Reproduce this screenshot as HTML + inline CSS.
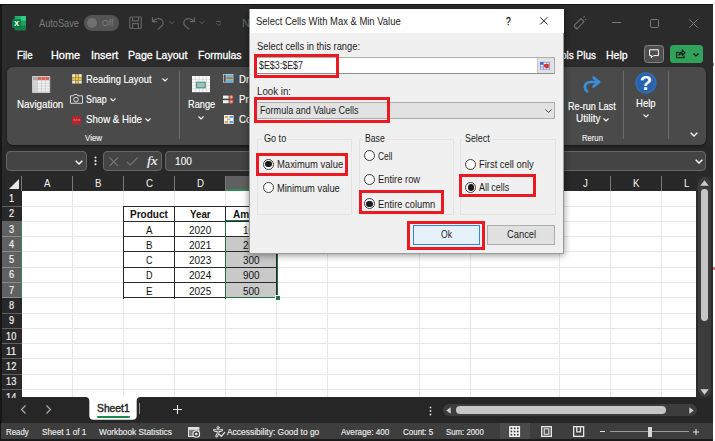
<!DOCTYPE html>
<html>
<head>
<meta charset="utf-8">
<title>Select Cells With Max &amp; Min Value</title>
<style>
html,body{margin:0;padding:0;}
body{width:715px;height:441px;overflow:hidden;background:#fff;font-family:"Liberation Sans",sans-serif;position:relative;}
.a{position:absolute;box-sizing:border-box;}
.t{position:absolute;white-space:nowrap;transform-origin:0 50%;display:block;}
svg{position:absolute;overflow:visible;}
.red{position:absolute;border:3px solid #ea1a23;box-sizing:border-box;}
.radio{position:absolute;width:11px;height:11px;border:1px solid #3c3c3c;border-radius:50%;background:#fff;box-sizing:border-box;}
.radio.on::after{content:"";position:absolute;left:1.3px;top:1.3px;width:6.4px;height:6.4px;border-radius:50%;background:#1a1a1a;}
.vl{position:absolute;width:1px;background:#e8e8e8;}
.hl{position:absolute;height:1px;background:#e8e8e8;}

</style>
</head>
<body>
<div class="a" style="left:0;top:4px;width:712.800px;height:437px;background:#2b2b2b;"></div>
<div class="a" style="left:0;top:4px;width:712.800px;height:1px;background:#151515;"></div>
<div class="a" style="left:0;top:4px;width:1.500px;height:437px;background:#161616;"></div>
<div class="a" style="left:1.500px;top:145px;width:711.300px;height:31px;background:#282828;"></div>
<svg style="left:11.900px;top:15.600px" width="14" height="14.200" viewBox="0 0 14 14.200">
<rect x="2.800" y="0" width="11.200" height="14.200" rx="1.200" fill="#1d9f60"/>
<rect x="8.400" y="0" width="5.600" height="4.800" fill="#35c886"/>
<rect x="2.800" y="0" width="5.600" height="4.800" fill="#23ad6b"/>
<rect x="8.400" y="4.800" width="5.600" height="4.600" fill="#1f9f60"/>
<rect x="2.800" y="9.400" width="11.200" height="4.800" rx="1" fill="#157f49"/>
<rect x="0" y="3.200" width="9" height="8.800" rx="1" fill="#0e7a41"/>
<text x="4.500" y="10.300" font-size="7.600" font-weight="bold" fill="#fff" text-anchor="middle" font-family="Liberation Sans, sans-serif">X</text>
</svg>
<span class="t" style="left:39.0px;top:18.4px;font-size:10.5px;color:#7b7b7b;font-weight:normal;height:10.5px;line-height:10.5px;transform:scaleX(0.8782);">AutoSave</span>
<div class="a" style="left:84px;top:15px;width:35px;height:16px;border-radius:8px;background:#545454;"></div>
<div class="a" style="left:87px;top:18px;width:10px;height:10px;border-radius:5px;background:#707070;"></div>
<span class="t" style="left:102.0px;top:18.7px;font-size:9px;color:#7c7c7c;font-weight:normal;height:9px;line-height:9px;transform:scaleX(0.9710);">Off</span>
<svg style="left:129px;top:16.300px" width="13" height="13.400" viewBox="0 0 14 14" fill="none" stroke="#676767" stroke-width="1.2">
<rect x="0.8" y="0.8" width="12.4" height="12.400" rx="1"/><path d="M3.800 0.800v4.200h6.400v-4.200M3.800 13.200v-5.200h6.400v5.200"/></svg>
<svg style="left:151px;top:16px" width="14" height="14" viewBox="0 0 14 14" fill="none" stroke="#676767" stroke-width="1.2">
<path d="M1.5 1.2v4.5h4.5"/><path d="M1.8 5.5C4 2.6 8 1.6 10.6 3.6c2.2 1.8 2 4.6 0.2 6.4L6.8 13.4"/></svg>
<svg style="left:168.700px;top:20.800px" width="5.600" height="3.600" viewBox="0 0 6 4" fill="none" stroke="#676767" stroke-width="1"><path d="M0.5 0.5L3 3L5.5 0.5"/></svg>
<svg style="left:182px;top:16px" width="14" height="14" viewBox="0 0 14 14" fill="none" stroke="#676767" stroke-width="1.2">
<path d="M12.5 1.2v4.5h-4.5"/><path d="M12.2 5.5C10 2.6 6 1.6 3.400 3.6c-2.2 1.8 -2 4.6 -0.2 6.4L7.2 13.4"/></svg>
<svg style="left:199.300px;top:20.800px" width="5.600" height="3.600" viewBox="0 0 6 4" fill="none" stroke="#676767" stroke-width="1"><path d="M0.5 0.5L3 3L5.5 0.5"/></svg>
<svg style="left:216.100px;top:20.700px" width="5.400" height="5.600" viewBox="0 0 6 6" fill="none" stroke="#676767" stroke-width="1"><path d="M0.5 0.5H5.5M0.5 2.6L3 5L5.5 2.6"/></svg>
<span class="t" style="left:242.0px;top:18.2px;font-size:10.5px;color:#6a6a6a;font-weight:normal;height:10.5px;line-height:10.5px;transform:scaleX(1.0535);">N</span>
<svg style="left:573px;top:16px" width="14" height="14" viewBox="0 0 14 14" fill="none" stroke="#6f6f6f" stroke-width="1.1">
<path d="M2.2 11.8L1.2 9.4L8 2.6l3 3L4.6 12.4z"/><path d="M2.5 12l2 1.200M10.500 1.500l1.200-1M12 3.500l1.300-0.300"/></svg>
<div class="a" style="left:612px;top:22px;width:9px;height:1px;background:#7c7c7c;"></div>
<div class="a" style="left:650px;top:19px;width:9px;height:9px;border:1px solid #7c7c7c;border-radius:1.5px;"></div>
<svg style="left:689px;top:19px" width="9" height="9" viewBox="0 0 9 9" stroke="#7c7c7c" stroke-width="1"><path d="M0.3 0.3L8.7 8.700M8.700 0.300L0.300 8.700"/></svg>
<span class="t" style="left:17.3px;top:49.0px;font-size:11.6px;color:#fff;font-weight:normal;height:11.6px;line-height:11.6px;transform:scaleX(0.8401);-webkit-text-stroke:0.3px;">File</span>
<span class="t" style="left:51.0px;top:49.0px;font-size:11.6px;color:#fff;font-weight:normal;height:11.6px;line-height:11.6px;transform:scaleX(0.9374);-webkit-text-stroke:0.3px;">Home</span>
<span class="t" style="left:90.5px;top:49.0px;font-size:11.6px;color:#fff;font-weight:normal;height:11.6px;line-height:11.6px;transform:scaleX(0.9414);-webkit-text-stroke:0.3px;">Insert</span>
<span class="t" style="left:128.2px;top:49.0px;font-size:11.6px;color:#fff;font-weight:normal;height:11.6px;line-height:11.6px;transform:scaleX(0.9123);-webkit-text-stroke:0.3px;">Page Layout</span>
<span class="t" style="left:198.2px;top:49.0px;font-size:11.6px;color:#fff;font-weight:normal;height:11.6px;line-height:11.6px;transform:scaleX(0.9022);-webkit-text-stroke:0.3px;">Formulas</span>
<span class="t" style="left:561.3px;top:49.0px;font-size:11.6px;color:#fff;font-weight:normal;height:11.6px;line-height:11.6px;transform:scaleX(0.8643);-webkit-text-stroke:0.3px;">ols Plus</span>
<span class="t" style="left:606.0px;top:49.0px;font-size:11.6px;color:#fff;font-weight:normal;height:11.6px;line-height:11.6px;transform:scaleX(0.9095);-webkit-text-stroke:0.3px;">Help</span>
<div class="a" style="left:643.500px;top:44.700px;width:20.500px;height:18.600px;background:#4e4e4e;border:1px solid #858585;border-radius:3.500px;"></div>
<svg style="left:649px;top:49px" width="10" height="10" viewBox="0 0 10 10" fill="none" stroke="#fff" stroke-width="1"><path d="M0.6 0.8h8.800v5.800H4.600L2.400 8.800V6.600H0.600z"/></svg>
<div class="a" style="left:670px;top:44.700px;width:32.600px;height:18.600px;background:#2fa35a;border-radius:3.500px;"></div>
<svg style="left:676.200px;top:49.300px" width="9.600" height="9.600" viewBox="0 0 11 11" fill="none" stroke="#151515" stroke-width="1.25"><path d="M3.500 3.800H0.800V10h8.400V7.500"/><path d="M3.300 7.500C3.600 5 5.200 3.600 7.300 3.500V1.300L10.300 4.300L7.300 7.200V5.200C5.600 5.200 4.300 5.900 3.300 7.500z"/></svg>
<svg style="left:693px;top:52.500px" width="6" height="4" viewBox="0 0 6 4" fill="none" stroke="#111" stroke-width="1.2"><path d="M0.5 0.5L3 3L5.5 0.5"/></svg>
<div class="a" style="left:6.500px;top:66.600px;width:699.500px;height:78.200px;background:#4a4a4a;border-radius:6px;box-shadow:0 1px 2.500px rgba(0,0,0,0.55);"></div>
<svg style="left:32px;top:76.200px" width="18.200" height="17" viewBox="0 0 18.200 17"><rect width="18.200" height="17" rx="0.800" fill="#cfcfcf"/><rect x="0.800" y="0.800" width="16.600" height="15.400" fill="#bdbdbd"/><rect x="1.2" y="1.2" width="3.8" height="2.6" fill="#a9a9a9"/><rect x="5.6" y="1.2" width="3.5" height="2.6" fill="#e2594b"/><rect x="9.6" y="1.2" width="3.5" height="2.6" fill="#e2594b"/><rect x="13.6" y="1.2" width="3.5" height="2.6" fill="#e2594b"/><rect x="1.2" y="4.5" width="3.8" height="2.4" fill="#d6d6d6"/><rect x="5.6" y="4.5" width="3.5" height="2.4" fill="#f1f1f1"/><rect x="9.6" y="4.5" width="3.5" height="2.4" fill="#f1f1f1"/><rect x="13.6" y="4.5" width="3.5" height="2.4" fill="#f1f1f1"/><rect x="1.2" y="7.4" width="3.8" height="2.4" fill="#d6d6d6"/><rect x="5.6" y="7.4" width="3.5" height="2.4" fill="#f1f1f1"/><rect x="9.6" y="7.4" width="3.5" height="2.4" fill="#f1f1f1"/><rect x="13.6" y="7.4" width="3.5" height="2.4" fill="#f1f1f1"/><rect x="1.2" y="10.3" width="3.8" height="2.4" fill="#d6d6d6"/><rect x="5.6" y="10.3" width="3.5" height="2.4" fill="#f1f1f1"/><rect x="9.6" y="10.3" width="3.5" height="2.4" fill="#f1f1f1"/><rect x="13.6" y="10.3" width="3.5" height="2.4" fill="#f1f1f1"/><rect x="1.2" y="13.2" width="3.8" height="2.4" fill="#d6d6d6"/><rect x="5.6" y="13.2" width="3.5" height="2.4" fill="#f1f1f1"/><rect x="9.6" y="13.2" width="3.5" height="2.4" fill="#f1f1f1"/><rect x="13.6" y="13.2" width="3.5" height="2.4" fill="#f1f1f1"/></svg>
<span class="t" style="left:17.3px;top:100.1px;font-size:10.3px;color:#fff;font-weight:normal;height:10.3px;line-height:10.3px;transform:scaleX(0.9516);-webkit-text-stroke:0.15px;">Navigation</span>
<svg style="left:71.700px;top:73.700px" width="9.800" height="9.600" viewBox="0 0 9.800 9.600"><rect width="9.800" height="9.600" fill="#6a6654"/><rect x="0.2" y="0.20" width="2.9" height="2.84" fill="#ebe8dc"/><rect x="3.5" y="0.20" width="2.9" height="2.84" fill="#f3c63f"/><rect x="6.8" y="0.20" width="2.9" height="2.84" fill="#ebe8dc"/><rect x="0.2" y="3.43" width="2.9" height="2.84" fill="#f3c63f"/><rect x="3.5" y="3.43" width="2.9" height="2.84" fill="#f3c63f"/><rect x="6.8" y="3.43" width="2.9" height="2.84" fill="#f3c63f"/><rect x="0.2" y="6.66" width="2.9" height="2.84" fill="#ebe8dc"/><rect x="3.5" y="6.66" width="2.9" height="2.84" fill="#f3c63f"/><rect x="6.8" y="6.66" width="2.9" height="2.84" fill="#ebe8dc"/></svg>
<span class="t" style="left:86.4px;top:74.9px;font-size:10.3px;color:#fff;font-weight:normal;height:10.3px;line-height:10.3px;transform:scaleX(0.9079);-webkit-text-stroke:0.15px;">Reading Layout</span>
<svg style="left:162px;top:77.500px" width="6" height="4" viewBox="0 0 6 4" fill="none" stroke="#fff" stroke-width="1.1"><path d="M0.5 0.5L3 3L5.5 0.5"/></svg>
<svg style="left:70px;top:93.900px" width="13" height="9.800" viewBox="0 0 13 9.800" fill="none" stroke="#d6d6d6" stroke-width="1"><path d="M0.500 1.800h3l0.700-1.300h3l0.700 1.300h4.600v7.500H0.500z"/><circle cx="6" cy="5.600" r="2.300"/></svg>
<span class="t" style="left:86.4px;top:95.0px;font-size:10.3px;color:#fff;font-weight:normal;height:10.3px;line-height:10.3px;transform:scaleX(0.8561);-webkit-text-stroke:0.15px;">Snap</span>
<svg style="left:109.600px;top:97.500px" width="6" height="4" viewBox="0 0 6 4" fill="none" stroke="#fff" stroke-width="1.1"><path d="M0.5 0.5L3 3L5.5 0.5"/></svg>
<svg style="left:72.400px;top:115.500px" width="9" height="8.500" viewBox="0 0 9 8.500"><rect width="9" height="8.500" rx="0.800" fill="#b3262f"/><rect x="1.200" y="3.300" width="1.600" height="1.300" fill="#e27a80"/><rect x="3.700" y="3.300" width="1.600" height="1.300" fill="#e27a80"/><rect x="6.200" y="3.300" width="1.600" height="1.300" fill="#e27a80"/></svg>
<span class="t" style="left:86.4px;top:115.4px;font-size:10.3px;color:#fff;font-weight:normal;height:10.3px;line-height:10.3px;transform:scaleX(0.9390);-webkit-text-stroke:0.15px;">Show &amp; Hide</span>
<svg style="left:145px;top:118px" width="6" height="4" viewBox="0 0 6 4" fill="none" stroke="#fff" stroke-width="1.1"><path d="M0.5 0.5L3 3L5.5 0.5"/></svg>
<span class="t" style="left:85.0px;top:132.7px;font-size:9.6px;color:#f0f0f0;font-weight:normal;height:9.6px;line-height:9.6px;transform:scaleX(0.8242);-webkit-text-stroke:0.15px;">View</span>
<div class="a" style="left:178.500px;top:71px;width:1px;height:68px;background:#6b6b6b;"></div>
<svg style="left:192px;top:76.400px" width="18" height="16.200" viewBox="0 0 18 16.200">
<rect width="18" height="16.200" fill="#fafafa"/>
<g stroke="#d2d2d2" stroke-width="0.700"><path d="M0 3.240H18M0 6.480H18M0 9.720H18M0 12.960H18M3.600 0V16.200M7.200 0V16.200M10.800 0V16.200M14.400 0V16.200"/></g>
<rect x="4.600" y="6.200" width="8.600" height="5.600" fill="#a9bcc6" stroke="#3f9a74" stroke-width="1.100"/>
</svg>
<span class="t" style="left:187.6px;top:100.1px;font-size:10.3px;color:#fff;font-weight:normal;height:10.3px;line-height:10.3px;transform:scaleX(0.8964);-webkit-text-stroke:0.15px;">Range</span>
<svg style="left:197.700px;top:116px" width="6" height="4" viewBox="0 0 6 4" fill="none" stroke="#fff" stroke-width="1.1"><path d="M0.5 0.5L3 3L5.5 0.5"/></svg>
<svg style="left:223.300px;top:74.100px" width="10.400" height="8.600" viewBox="0 0 10.400 8.600"><rect width="10.400" height="8.600" fill="#cfd4d8"/><rect x="0.700" y="0.700" width="2" height="7.200" fill="#4b4f55"/><rect x="3.300" y="0.600" width="6.600" height="2.200" fill="#55b4ea"/><rect x="3.300" y="3.200" width="6.600" height="2.200" fill="#a9763a"/><rect x="3.300" y="5.800" width="6.600" height="2.200" fill="#55b4ea"/></svg>
<svg style="left:223.300px;top:95px" width="10.400" height="8.800" viewBox="0 0 10.400 8.800"><rect x="0" y="0.600" width="5.600" height="3" fill="#f2f2f2"/><rect x="0" y="5.200" width="5.600" height="3" fill="#f2f2f2"/><circle cx="8.200" cy="2.100" r="2.100" fill="#e8644c"/><circle cx="8.200" cy="6.700" r="2.100" fill="#e8644c"/><path d="M7.300 1.200L9.100 3M9.100 1.200L7.300 3M7.300 5.800L9.100 7.600M9.100 5.800L7.300 7.600" stroke="#fbe3dd" stroke-width="0.600"/></svg>
<svg style="left:223.800px;top:115px" width="9.600" height="8.800" viewBox="0 0 9.600 8.800"><rect width="9.600" height="8.800" fill="#f4f4f4"/><rect x="0.800" y="1" width="3.400" height="1.800" fill="#ee9a2e"/><rect x="5.600" y="1" width="3.200" height="1.800" fill="#4a90e2"/><rect x="3.200" y="3.600" width="3.200" height="1.600" fill="#9fb4d0"/><rect x="0.800" y="6" width="3.400" height="1.800" fill="#ee9a2e"/><rect x="5.600" y="6" width="3.200" height="1.800" fill="#4a90e2"/></svg>
<span class="t" style="left:238.5px;top:74.9px;font-size:10.3px;color:#fff;font-weight:normal;height:10.3px;line-height:10.3px;transform:scaleX(0.9400);-webkit-text-stroke:0.15px;">Dr</span>
<span class="t" style="left:238.5px;top:95.0px;font-size:10.3px;color:#fff;font-weight:normal;height:10.3px;line-height:10.3px;transform:scaleX(0.9400);-webkit-text-stroke:0.15px;">Pr</span>
<span class="t" style="left:238.5px;top:115.4px;font-size:10.3px;color:#fff;font-weight:normal;height:10.3px;line-height:10.3px;transform:scaleX(0.9400);-webkit-text-stroke:0.15px;">Co</span>
<svg style="left:582px;top:76px" width="20" height="17" viewBox="0 0 20 17" fill="none" stroke="#3b8fe2" stroke-width="2.600" stroke-linecap="round" stroke-linejoin="round"><path d="M11.500 1.600L17.200 6L11.500 10.400"/><path d="M16.400 6H8.500C5 6 2.800 8.300 2.800 11c0 1.900 0.900 3.300 2.400 4.300"/></svg>
<span class="t" style="left:568.3px;top:102.3px;font-size:10.3px;color:#fff;font-weight:normal;height:10.3px;line-height:10.3px;transform:scaleX(0.8864);-webkit-text-stroke:0.15px;">Re-run Last</span>
<span class="t" style="left:575.6px;top:114.2px;font-size:10.3px;color:#fff;font-weight:normal;height:10.3px;line-height:10.3px;transform:scaleX(0.9693);-webkit-text-stroke:0.15px;">Utility</span>
<svg style="left:602.500px;top:117.500px" width="6" height="4" viewBox="0 0 6 4" fill="none" stroke="#fff" stroke-width="1.1"><path d="M0.5 0.5L3 3L5.5 0.5"/></svg>
<span class="t" style="left:581.7px;top:133.0px;font-size:9.6px;color:#f0f0f0;font-weight:normal;height:9.6px;line-height:9.6px;transform:scaleX(0.7995);-webkit-text-stroke:0.15px;">Rerun</span>
<div class="a" style="left:623px;top:71px;width:1px;height:68px;background:#6b6b6b;"></div>
<svg style="left:634.800px;top:72.100px" width="21.800" height="21.800" viewBox="0 0 21 21"><circle cx="10.500" cy="10.500" r="10.300" fill="#2f6fb8"/><circle cx="10.500" cy="10.500" r="9" fill="#2a63ad"/><text x="10.500" y="17.400" font-size="19.500" font-weight="bold" fill="#fff" text-anchor="middle" font-family="Liberation Sans, sans-serif">?</text></svg>
<span class="t" style="left:636.0px;top:99.4px;font-size:10.3px;color:#fff;font-weight:normal;height:10.3px;line-height:10.3px;transform:scaleX(0.9251);-webkit-text-stroke:0.15px;">Help</span>
<svg style="left:642.700px;top:114px" width="6" height="4" viewBox="0 0 6 4" fill="none" stroke="#fff" stroke-width="1.1"><path d="M0.5 0.5L3 3L5.5 0.5"/></svg>
<div class="a" style="left:667.500px;top:71px;width:1px;height:68px;background:#6b6b6b;"></div>
<svg style="left:690px;top:132px" width="8" height="5" viewBox="0 0 8 5" fill="none" stroke="#fff" stroke-width="1.4"><path d="M0.700 0.700L4 4L7.300 0.700"/></svg>
<div class="a" style="left:6.400px;top:151.300px;width:81px;height:19.700px;background:#444444;border:1px solid #666;border-radius:4px;"></div>
<svg style="left:75.300px;top:160px" width="8" height="5" viewBox="0 0 8 5" fill="none" stroke="#fff" stroke-width="1.4"><path d="M0.700 0.700L4 4L7.300 0.700"/></svg>
<svg style="left:93.800px;top:156.400px" width="3" height="10" viewBox="0 0 3 10" fill="#e6e6e6"><circle cx="1.500" cy="1.500" r="1.050"/><circle cx="1.500" cy="4.900" r="1.050"/><circle cx="1.500" cy="8.300" r="1.050"/></svg>
<div class="a" style="left:103.300px;top:151.300px;width:59px;height:19.700px;background:#444444;border:1px solid #666;border-radius:4px;"></div>
<svg style="left:108.800px;top:156.700px" width="9.600" height="9.400" viewBox="0 0 9 9" stroke="#7a7a7a" stroke-width="1" fill="none"><path d="M0.500 0.500L8.500 8.500M8.500 0.500L0.500 8.500"/></svg>
<svg style="left:126.300px;top:156.600px" width="12.500" height="8.600" viewBox="0 0 11 8" stroke="#7a7a7a" stroke-width="1" fill="none"><path d="M0.500 4.500L3.500 7.500L10.500 0.500"/></svg>
<span class="t" style="left:147.3px;top:153.8px;font-size:13.5px;color:#f3f3f3;font-weight:normal;font-family:'Liberation Serif',serif;height:13.5px;line-height:13.5px;transform:scaleX(1.0769);font-style:italic;-webkit-text-stroke:0.2px;">fx</span>
<div class="a" style="left:165px;top:151.300px;width:540.500px;height:19.700px;background:#444444;border:1px solid #666;border-radius:4px;"></div>
<span class="t" style="left:174.5px;top:155.9px;font-size:10.8px;color:#f5f5f5;font-weight:normal;height:10.8px;line-height:10.8px;transform:scaleX(0.9381);-webkit-text-stroke:0.15px;">100</span>
<svg style="left:694.500px;top:158.500px" width="8" height="5" viewBox="0 0 8 5" fill="none" stroke="#fff" stroke-width="1.4"><path d="M0.700 0.700L4 4L7.300 0.700"/></svg>
<div class="a" style="left:2px;top:175.500px;width:694.500px;height:222px;background:#282828;"></div>
<div class="a" style="left:21.5px;top:190.6px;width:674.3px;height:206.9px;background:#fff;"></div>
<div class="a" style="left:226px;top:175.500px;width:50.500px;height:15px;background:#606060;"></div>
<div class="a" style="left:226px;top:189.400px;width:50.500px;height:1.200px;background:#2e8b57;"></div>
<span class="t" style="left:43.7px;top:179.1px;font-size:10.2px;color:#f4f4f4;font-weight:normal;height:10.2px;line-height:10.2px;transform:scaleX(0.9500);">A</span>
<span class="t" style="left:94.7px;top:179.1px;font-size:10.2px;color:#f4f4f4;font-weight:normal;height:10.2px;line-height:10.2px;transform:scaleX(0.9500);">B</span>
<span class="t" style="left:145.9px;top:179.1px;font-size:10.2px;color:#f4f4f4;font-weight:normal;height:10.2px;line-height:10.2px;transform:scaleX(0.9500);">C</span>
<span class="t" style="left:197.1px;top:179.1px;font-size:10.2px;color:#f4f4f4;font-weight:normal;height:10.2px;line-height:10.2px;transform:scaleX(0.9500);">D</span>
<span class="t" style="left:250.7px;top:179.1px;font-size:10.2px;color:#f4f4f4;font-weight:normal;height:10.2px;line-height:10.2px;transform:scaleX(0.9500);">E</span>
<span class="t" style="left:298.8px;top:179.1px;font-size:10.2px;color:#f4f4f4;font-weight:normal;height:10.2px;line-height:10.2px;transform:scaleX(0.9500);">F</span>
<span class="t" style="left:370.3px;top:179.1px;font-size:10.2px;color:#f4f4f4;font-weight:normal;height:10.2px;line-height:10.2px;transform:scaleX(0.9500);">G</span>
<span class="t" style="left:441.9px;top:179.1px;font-size:10.2px;color:#f4f4f4;font-weight:normal;height:10.2px;line-height:10.2px;transform:scaleX(0.9500);">H</span>
<span class="t" style="left:513.9px;top:179.1px;font-size:10.2px;color:#f4f4f4;font-weight:normal;height:10.2px;line-height:10.2px;transform:scaleX(0.9500);">I</span>
<span class="t" style="left:582.8px;top:179.1px;font-size:10.2px;color:#f4f4f4;font-weight:normal;height:10.2px;line-height:10.2px;transform:scaleX(0.9500);">J</span>
<span class="t" style="left:632.8px;top:179.1px;font-size:10.2px;color:#f4f4f4;font-weight:normal;height:10.2px;line-height:10.2px;transform:scaleX(0.9500);">K</span>
<span class="t" style="left:684.2px;top:179.1px;font-size:10.2px;color:#f4f4f4;font-weight:normal;height:10.2px;line-height:10.2px;transform:scaleX(0.9500);">L</span>
<div class="a" style="left:21px;top:176px;width:1px;height:14.600px;background:#787878;"></div>
<div class="a" style="left:72px;top:176px;width:1px;height:14.600px;background:#787878;"></div>
<div class="a" style="left:123px;top:176px;width:1px;height:14.600px;background:#787878;"></div>
<div class="a" style="left:174px;top:176px;width:1px;height:14.600px;background:#787878;"></div>
<div class="a" style="left:225px;top:176px;width:1px;height:14.600px;background:#787878;"></div>
<div class="a" style="left:276px;top:176px;width:1px;height:14.600px;background:#787878;"></div>
<div class="a" style="left:327px;top:176px;width:1px;height:14.600px;background:#787878;"></div>
<div class="a" style="left:419px;top:176px;width:1px;height:14.600px;background:#787878;"></div>
<div class="a" style="left:470px;top:176px;width:1px;height:14.600px;background:#787878;"></div>
<div class="a" style="left:559px;top:176px;width:1px;height:14.600px;background:#787878;"></div>
<div class="a" style="left:610px;top:176px;width:1px;height:14.600px;background:#787878;"></div>
<div class="a" style="left:661px;top:176px;width:1px;height:14.600px;background:#787878;"></div>
<div class="vl" style="left:72px;top:190.6px;height:206.9px;"></div>
<div class="vl" style="left:123px;top:190.6px;height:206.9px;"></div>
<div class="vl" style="left:174px;top:190.6px;height:206.9px;"></div>
<div class="vl" style="left:225px;top:190.6px;height:206.9px;"></div>
<div class="vl" style="left:276px;top:190.6px;height:206.9px;"></div>
<div class="vl" style="left:327px;top:190.6px;height:206.9px;"></div>
<div class="vl" style="left:419px;top:190.6px;height:206.9px;"></div>
<div class="vl" style="left:470px;top:190.6px;height:206.9px;"></div>
<div class="vl" style="left:559px;top:190.6px;height:206.9px;"></div>
<div class="vl" style="left:610px;top:190.6px;height:206.9px;"></div>
<div class="vl" style="left:661px;top:190.6px;height:206.9px;"></div>
<div class="hl" style="left:21.5px;top:206px;width:674.3px;"></div>
<div class="a" style="left:2px;top:206px;width:19.500px;height:1px;background:#606060;"></div>
<div class="hl" style="left:21.5px;top:221px;width:674.3px;"></div>
<div class="a" style="left:2px;top:221px;width:19.500px;height:1px;background:#606060;"></div>
<div class="hl" style="left:21.5px;top:236px;width:674.3px;"></div>
<div class="a" style="left:2px;top:236px;width:19.500px;height:1px;background:#606060;"></div>
<div class="hl" style="left:21.5px;top:251px;width:674.3px;"></div>
<div class="a" style="left:2px;top:251px;width:19.500px;height:1px;background:#606060;"></div>
<div class="hl" style="left:21.5px;top:267px;width:674.3px;"></div>
<div class="a" style="left:2px;top:267px;width:19.500px;height:1px;background:#606060;"></div>
<div class="hl" style="left:21.5px;top:282px;width:674.3px;"></div>
<div class="a" style="left:2px;top:282px;width:19.500px;height:1px;background:#606060;"></div>
<div class="hl" style="left:21.5px;top:297px;width:674.3px;"></div>
<div class="a" style="left:2px;top:297px;width:19.500px;height:1px;background:#606060;"></div>
<div class="hl" style="left:21.5px;top:313px;width:674.3px;"></div>
<div class="a" style="left:2px;top:313px;width:19.500px;height:1px;background:#606060;"></div>
<div class="hl" style="left:21.5px;top:328px;width:674.3px;"></div>
<div class="a" style="left:2px;top:328px;width:19.500px;height:1px;background:#606060;"></div>
<div class="hl" style="left:21.5px;top:343px;width:674.3px;"></div>
<div class="a" style="left:2px;top:343px;width:19.500px;height:1px;background:#606060;"></div>
<div class="hl" style="left:21.5px;top:358px;width:674.3px;"></div>
<div class="a" style="left:2px;top:358px;width:19.500px;height:1px;background:#606060;"></div>
<div class="hl" style="left:21.5px;top:374px;width:674.3px;"></div>
<div class="a" style="left:2px;top:374px;width:19.500px;height:1px;background:#606060;"></div>
<div class="hl" style="left:21.5px;top:389px;width:674.3px;"></div>
<div class="a" style="left:2px;top:389px;width:19.500px;height:1px;background:#606060;"></div>
<svg style="left:9px;top:179px" width="10" height="10" viewBox="0 0 10 10"><path d="M10 0V10H0z" fill="#e6e6e6"/></svg>
<div class="a" style="left:2px;top:221.1px;width:19px;height:76.3px;background:#606060;"></div>
<div class="a" style="left:20.500px;top:221.1px;width:1.500px;height:76.3px;background:#2e8b57;"></div>
<div class="a" style="left:2px;top:236px;width:18.500px;height:1px;background:#8c8c8c;"></div>
<div class="a" style="left:2px;top:251px;width:18.500px;height:1px;background:#8c8c8c;"></div>
<div class="a" style="left:2px;top:267px;width:18.500px;height:1px;background:#8c8c8c;"></div>
<div class="a" style="left:2px;top:282px;width:18.500px;height:1px;background:#8c8c8c;"></div>
<div class="a" style="left:2px;top:297px;width:18.500px;height:1px;background:#8c8c8c;"></div>
<span class="t" style="left:8.7px;top:194.0px;font-size:10.4px;color:#eeeeee;font-weight:normal;height:10.4px;line-height:10.4px;transform:scaleX(0.8908);-webkit-text-stroke:0.2px;">1</span>
<span class="t" style="left:8.7px;top:209.3px;font-size:10.4px;color:#eeeeee;font-weight:normal;height:10.4px;line-height:10.4px;transform:scaleX(0.8908);-webkit-text-stroke:0.2px;">2</span>
<span class="t" style="left:8.7px;top:224.6px;font-size:10.4px;color:#eeeeee;font-weight:normal;height:10.4px;line-height:10.4px;transform:scaleX(0.8908);-webkit-text-stroke:0.2px;">3</span>
<span class="t" style="left:8.7px;top:239.8px;font-size:10.4px;color:#eeeeee;font-weight:normal;height:10.4px;line-height:10.4px;transform:scaleX(0.8908);-webkit-text-stroke:0.2px;">4</span>
<span class="t" style="left:8.7px;top:255.1px;font-size:10.4px;color:#eeeeee;font-weight:normal;height:10.4px;line-height:10.4px;transform:scaleX(0.8908);-webkit-text-stroke:0.2px;">5</span>
<span class="t" style="left:8.7px;top:270.4px;font-size:10.4px;color:#eeeeee;font-weight:normal;height:10.4px;line-height:10.4px;transform:scaleX(0.8908);-webkit-text-stroke:0.2px;">6</span>
<span class="t" style="left:8.7px;top:285.7px;font-size:10.4px;color:#eeeeee;font-weight:normal;height:10.4px;line-height:10.4px;transform:scaleX(0.8908);-webkit-text-stroke:0.2px;">7</span>
<span class="t" style="left:8.7px;top:300.9px;font-size:10.4px;color:#eeeeee;font-weight:normal;height:10.4px;line-height:10.4px;transform:scaleX(0.8908);-webkit-text-stroke:0.2px;">8</span>
<span class="t" style="left:8.7px;top:316.2px;font-size:10.4px;color:#eeeeee;font-weight:normal;height:10.4px;line-height:10.4px;transform:scaleX(0.8908);-webkit-text-stroke:0.2px;">9</span>
<span class="t" style="left:6.2px;top:331.5px;font-size:10.4px;color:#eeeeee;font-weight:normal;height:10.4px;line-height:10.4px;transform:scaleX(0.8908);-webkit-text-stroke:0.2px;">10</span>
<span class="t" style="left:6.2px;top:346.7px;font-size:10.4px;color:#eeeeee;font-weight:normal;height:10.4px;line-height:10.4px;transform:scaleX(0.9540);-webkit-text-stroke:0.2px;">11</span>
<span class="t" style="left:6.2px;top:362.0px;font-size:10.4px;color:#eeeeee;font-weight:normal;height:10.4px;line-height:10.4px;transform:scaleX(0.8908);-webkit-text-stroke:0.2px;">12</span>
<span class="t" style="left:6.2px;top:377.3px;font-size:10.4px;color:#eeeeee;font-weight:normal;height:10.4px;line-height:10.4px;transform:scaleX(0.8908);-webkit-text-stroke:0.2px;">13</span>
<span class="t" style="left:6.2px;top:392.5px;font-size:10.4px;color:#eeeeee;font-weight:normal;height:10.4px;line-height:10.4px;transform:scaleX(0.8908);-webkit-text-stroke:0.2px;">14</span>
<div class="a" style="left:225.9px;top:236.4px;width:51.099999999999994px;height:61.1px;background:#c9c9c9;"></div>
<div class="a" style="left:123px;top:206px;width:155px;height:1px;background:#2a2a2a;"></div>
<div class="a" style="left:123px;top:221px;width:155px;height:1px;background:#2a2a2a;"></div>
<div class="a" style="left:123px;top:236px;width:155px;height:1px;background:#2a2a2a;"></div>
<div class="a" style="left:123px;top:251px;width:155px;height:1px;background:#2a2a2a;"></div>
<div class="a" style="left:123px;top:267px;width:155px;height:1px;background:#2a2a2a;"></div>
<div class="a" style="left:123px;top:282px;width:155px;height:1px;background:#2a2a2a;"></div>
<div class="a" style="left:123px;top:297px;width:155px;height:1px;background:#2a2a2a;"></div>
<div class="a" style="left:123px;top:206px;width:1px;height:93px;background:#2a2a2a;"></div>
<div class="a" style="left:174px;top:206px;width:1px;height:93px;background:#2a2a2a;"></div>
<div class="a" style="left:225px;top:206px;width:1px;height:93px;background:#2a2a2a;"></div>
<div class="a" style="left:276px;top:206px;width:1px;height:93px;background:#2a2a2a;"></div>
<div class="a" style="left:225px;top:220px;width:53px;height:78px;border:1.500px solid #217346;"></div>
<div class="a" style="left:276px;top:296px;width:4px;height:4px;background:#217346;box-shadow:-0.5px -0.5px 0 0.5px #fff;"></div>
<span class="t" style="left:130.0px;top:209.9px;font-size:10px;color:#111;font-weight:bold;height:10px;line-height:10px;transform:scaleX(1.0005);">Product</span>
<span class="t" style="left:190.0px;top:209.9px;font-size:10px;color:#111;font-weight:bold;height:10px;line-height:10px;transform:scaleX(0.9744);">Year</span>
<span class="t" style="left:232.6px;top:209.9px;font-size:10px;color:#111;font-weight:bold;height:10px;line-height:10px;transform:scaleX(1.0058);">Amount</span>
<span class="t" style="left:145.6px;top:225.5px;font-size:10.2px;color:#111;font-weight:normal;height:10.2px;line-height:10.2px;transform:scaleX(0.9563);">A</span>
<span class="t" style="left:189.2px;top:225.5px;font-size:10.2px;color:#111;font-weight:normal;height:10.2px;line-height:10.2px;transform:scaleX(0.9792);">2020</span>
<span class="t" style="left:243.1px;top:225.5px;font-size:10.2px;color:#111;font-weight:normal;height:10.2px;line-height:10.2px;transform:scaleX(0.9765);">100</span>
<span class="t" style="left:145.6px;top:240.7px;font-size:10.2px;color:#111;font-weight:normal;height:10.2px;line-height:10.2px;transform:scaleX(0.9563);">B</span>
<span class="t" style="left:189.2px;top:240.7px;font-size:10.2px;color:#111;font-weight:normal;height:10.2px;line-height:10.2px;transform:scaleX(0.9792);">2021</span>
<span class="t" style="left:243.1px;top:240.7px;font-size:10.2px;color:#111;font-weight:normal;height:10.2px;line-height:10.2px;transform:scaleX(0.9765);">200</span>
<span class="t" style="left:145.6px;top:256.0px;font-size:10.2px;color:#111;font-weight:normal;height:10.2px;line-height:10.2px;transform:scaleX(0.8832);">C</span>
<span class="t" style="left:189.2px;top:256.0px;font-size:10.2px;color:#111;font-weight:normal;height:10.2px;line-height:10.2px;transform:scaleX(0.9792);">2023</span>
<span class="t" style="left:243.1px;top:256.0px;font-size:10.2px;color:#111;font-weight:normal;height:10.2px;line-height:10.2px;transform:scaleX(0.9765);">300</span>
<span class="t" style="left:145.6px;top:271.3px;font-size:10.2px;color:#111;font-weight:normal;height:10.2px;line-height:10.2px;transform:scaleX(0.8832);">D</span>
<span class="t" style="left:189.2px;top:271.3px;font-size:10.2px;color:#111;font-weight:normal;height:10.2px;line-height:10.2px;transform:scaleX(0.9792);">2024</span>
<span class="t" style="left:243.1px;top:271.3px;font-size:10.2px;color:#111;font-weight:normal;height:10.2px;line-height:10.2px;transform:scaleX(0.9765);">900</span>
<span class="t" style="left:145.6px;top:286.6px;font-size:10.2px;color:#111;font-weight:normal;height:10.2px;line-height:10.2px;transform:scaleX(0.9563);">E</span>
<span class="t" style="left:189.2px;top:286.6px;font-size:10.2px;color:#111;font-weight:normal;height:10.2px;line-height:10.2px;transform:scaleX(0.9792);">2025</span>
<span class="t" style="left:243.1px;top:286.6px;font-size:10.2px;color:#111;font-weight:normal;height:10.2px;line-height:10.2px;transform:scaleX(0.9765);">500</span>
<div class="a" style="left:695.800px;top:175.500px;width:17px;height:222.500px;background:#2b2b2b;"></div>
<div class="a" style="left:697.800px;top:176.500px;width:13.400px;height:220.500px;background:#3c3c3c;border-radius:6.500px;"></div>
<svg style="left:700px;top:179.500px" width="9" height="6" viewBox="0 0 9 6"><path d="M4.500 0.300L8.700 5.700H0.300z" fill="#cfcfcf"/></svg>
<div class="a" style="left:701.300px;top:188.700px;width:6.800px;height:132px;background:#c6c6c6;border-radius:3.400px;"></div>
<svg style="left:700px;top:389px" width="9" height="6" viewBox="0 0 9 6"><path d="M4.500 5.700L8.700 0.300H0.300z" fill="#cfcfcf"/></svg>
<div class="a" style="left:2px;top:397.500px;width:710.800px;height:25.300px;background:#262626;"></div>
<svg style="left:20.500px;top:405px" width="5" height="9" viewBox="0 0 5 9" fill="none" stroke="#b0b0b0" stroke-width="1.200"><path d="M4.500 0.500L0.500 4.500L4.500 8.500"/></svg>
<svg style="left:45.500px;top:405px" width="5" height="9" viewBox="0 0 5 9" fill="none" stroke="#b0b0b0" stroke-width="1.200"><path d="M0.500 0.500L4.500 4.500L0.500 8.500"/></svg>
<svg style="left:85.400px;top:397.300px" width="56" height="22.700" viewBox="0 0 56 23"><path d="M0 0H56C53.500 0 52 1.500 52 4V19C52 21.500 50.500 23 48 23H8C5.500 23 4 21.500 4 19V4C4 1.500 2.500 0 0 0z" fill="#fff"/></svg>
<span class="t" style="left:97.0px;top:403.0px;font-size:11.2px;color:#262626;font-weight:normal;height:11.2px;line-height:11.2px;transform:scaleX(0.9219);-webkit-text-stroke:0.45px #262626;">Sheet1</span>
<div class="a" style="left:97px;top:415.500px;width:32.700px;height:2px;background:#1d8a4d;border-radius:1px;"></div>
<div class="a" style="left:139px;top:403px;width:1px;height:11px;background:#8a8a8a;"></div>
<svg style="left:173px;top:405px" width="9" height="9" viewBox="0 0 9 9" stroke="#e8e8e8" stroke-width="1.1"><path d="M4.500 0V9M0 4.500H9"/></svg>
<svg style="left:428.600px;top:405.500px" width="3" height="10" viewBox="0 0 3 10" fill="#e0e0e0"><circle cx="1.500" cy="1.500" r="0.900"/><circle cx="1.500" cy="5" r="0.900"/><circle cx="1.500" cy="8.500" r="0.900"/></svg>
<div class="a" style="left:442.700px;top:404px;width:254px;height:12px;background:#3d3d3d;border-radius:6px;"></div>
<svg style="left:446px;top:406.500px" width="5" height="7" viewBox="0 0 5 7"><path d="M0.300 3.500L4.700 0.300V6.700z" fill="#d0d0d0"/></svg>
<div class="a" style="left:455.800px;top:406px;width:210.200px;height:8px;background:#c6c6c6;border-radius:4px;"></div>
<svg style="left:688.500px;top:406.500px" width="5" height="7" viewBox="0 0 5 7"><path d="M4.700 3.500L0.300 0.300V6.700z" fill="#d0d0d0"/></svg>
<div class="a" style="left:0.500px;top:422.800px;width:712.300px;height:16px;background:#3e3e3e;"></div>
<div class="a" style="left:0px;top:438.700px;width:712.800px;height:2.300px;background:#1a1a1a;"></div>
<span class="t" style="left:6.3px;top:427.9px;font-size:8.8px;color:#ececec;font-weight:normal;height:8.8px;line-height:8.8px;transform:scaleX(0.8924);-webkit-text-stroke:0.15px;">Ready</span>
<span class="t" style="left:42.0px;top:427.9px;font-size:8.8px;color:#ececec;font-weight:normal;height:8.8px;line-height:8.8px;transform:scaleX(0.9357);-webkit-text-stroke:0.15px;">Sheet 1 of 1</span>
<span class="t" style="left:99.0px;top:427.9px;font-size:8.8px;color:#ececec;font-weight:normal;height:8.8px;line-height:8.8px;transform:scaleX(0.9443);-webkit-text-stroke:0.15px;">Workbook Statistics</span>
<svg style="left:188px;top:426.800px" width="12.400" height="10.800" viewBox="0 0 12.400 10.800"><rect x="0.500" y="0.500" width="10.400" height="9" fill="#7c7c7c" stroke="#e2e2e2" stroke-width="1"/><rect x="1" y="1" width="9.400" height="1.800" fill="#e2e2e2"/><circle cx="8.300" cy="7" r="3.300" fill="#3e3e3e" stroke="#ececec" stroke-width="1.100"/><circle cx="8.300" cy="7" r="1.300" fill="#f4f4f4"/></svg>
<svg style="left:213.200px;top:425.800px" width="12.400" height="11.600" viewBox="0 0 12.400 11.600" fill="none" stroke-linecap="round" stroke-linejoin="round">
<g stroke="#ececec" stroke-width="2.600"><path d="M1.500 4.200C3.400 4.800 6.800 4.800 8.700 4.200M5.100 4.600V7.400L3.600 10.200"/></g>
<g stroke="#3e3e3e" stroke-width="0.800"><path d="M1.500 4.200C3.400 4.800 6.800 4.800 8.700 4.200M5.100 4.600V7.400L3.600 10.200"/></g>
<circle cx="5.100" cy="1.700" r="1.150" stroke="#ececec" stroke-width="0.900" fill="#3e3e3e"/>
<path d="M6.600 8.600L8.300 10.400L11.700 6.400" stroke="#ececec" stroke-width="1.200"/></svg>
<span class="t" style="left:226.7px;top:427.9px;font-size:8.8px;color:#ececec;font-weight:normal;height:8.8px;line-height:8.8px;transform:scaleX(0.9582);-webkit-text-stroke:0.15px;">Accessibility: Good to go</span>
<span class="t" style="left:341.2px;top:427.9px;font-size:8.8px;color:#ececec;font-weight:normal;height:8.8px;line-height:8.8px;transform:scaleX(0.9258);-webkit-text-stroke:0.15px;">Average: 400</span>
<span class="t" style="left:402.7px;top:427.9px;font-size:8.8px;color:#ececec;font-weight:normal;height:8.8px;line-height:8.8px;transform:scaleX(0.9078);-webkit-text-stroke:0.15px;">Count: 5</span>
<span class="t" style="left:446.0px;top:427.9px;font-size:8.8px;color:#ececec;font-weight:normal;height:8.8px;line-height:8.8px;transform:scaleX(0.8884);-webkit-text-stroke:0.15px;">Sum: 2000</span>
<div class="a" style="left:500px;top:422.800px;width:30px;height:16px;background:#4b4b4b;"></div>
<svg style="left:509px;top:425.700px" width="11.200" height="11" viewBox="0 0 11.200 11.200"><rect width="11.200" height="11.200" rx="0.600" fill="#f2f2f2"/><g fill="#3c3c3c"><rect x="1.5" y="1.5" width="1.700" height="1.700"/><rect x="4.75" y="1.5" width="1.700" height="1.700"/><rect x="8" y="1.5" width="1.700" height="1.700"/><rect x="1.5" y="4.75" width="1.700" height="1.700"/><rect x="4.75" y="4.75" width="1.700" height="1.700"/><rect x="8" y="4.75" width="1.700" height="1.700"/><rect x="1.5" y="8" width="1.700" height="1.700"/><rect x="4.75" y="8" width="1.700" height="1.700"/><rect x="8" y="8" width="1.700" height="1.700"/></g></svg>
<svg style="left:541.300px;top:425.700px" width="11" height="11" viewBox="0 0 11 11" fill="none" stroke="#e8e8e8" stroke-width="1.200"><rect x="0.600" y="0.600" width="9.800" height="9.800" fill="#6a6a6a"/><rect x="3.300" y="2.800" width="4.400" height="5.400" stroke-width="0.900" fill="#555"/></svg>
<svg style="left:573.200px;top:425.700px" width="11.300" height="11" viewBox="0 0 11.300 11" fill="none" stroke="#e8e8e8" stroke-width="1.300"><rect x="0.650" y="0.650" width="10" height="9.700"/><path d="M3.800 0.500V5.800H7.500V0.500"/><path d="M0.600 5.800H10.600" stroke-width="0" /></svg>
<div class="a" style="left:599.500px;top:431px;width:5.500px;height:1px;background:#e0e0e0;"></div>
<div class="a" style="left:609.500px;top:431px;width:79px;height:1px;background:#9a9a9a;"></div>
<div class="a" style="left:648px;top:427px;width:3.500px;height:9.500px;background:#d8d8d8;"></div>
<svg style="left:693.300px;top:428.500px" width="6" height="6" viewBox="0 0 6 6" stroke="#e0e0e0" stroke-width="1"><path d="M3 0V6M0 3H6"/></svg>
<div class="a" style="left:249.4px;top:8.6px;width:314.9px;height:245.4px;background:#f0f0f0;box-shadow:0 1px 7px rgba(0,0,0,0.45);border:0.500px solid #9a9a9a;"></div>
<div class="a" style="left:249.9px;top:9.1px;width:313.9px;height:24.0px;background:#fff;"></div>
<span class="t" style="left:255.8px;top:16.0px;font-size:10.6px;color:#1c1c1c;font-weight:normal;height:10.6px;line-height:10.6px;transform:scaleX(0.8916);">Select Cells With Max &amp; Min Value</span>
<span class="t" style="left:505.5px;top:15.6px;font-size:10.5px;color:#222;font-weight:normal;height:10.5px;line-height:10.5px;transform:scaleX(0.8043);-webkit-text-stroke:0.35px #222;">?</span>
<svg style="left:540.400px;top:16.900px" width="7.700" height="7.700" viewBox="0 0 8.500 8.500" stroke="#222" stroke-width="1.100"><path d="M0.300 0.300L8.200 8.200M8.200 0.300L0.300 8.200"/></svg>
<span class="t" style="left:257.0px;top:41.5px;font-size:10px;color:#1c1c1c;font-weight:normal;height:10px;line-height:10px;transform:scaleX(0.9311);">Select cells in this range:</span>
<div class="a" style="left:256px;top:57px;width:298.500px;height:17.300px;background:#fff;border:1px solid #adadad;border-bottom-color:#8e8e8e;"></div>
<div class="a" style="left:536.500px;top:58px;width:17px;height:15.300px;background:#e2e2e2;border-left:1px solid #c4c4c4;"></div>
<svg style="left:539.800px;top:61.800px" width="10" height="7.600" viewBox="0 0 10 7.600"><rect x="0" y="0" width="10" height="7.600" fill="#eef1fb"/><path d="M0 0.400H10M0 2.600H10M0 5H10M0 7.200H10M0.400 0V7.600M3.400 0V7.600M6.600 0V7.600M9.600 0V7.600" stroke="#6f86cf" stroke-width="0.700"/><rect x="0" y="0" width="3.400" height="2.600" fill="#4769c4"/><path d="M4.200 2.200L8.800 1.700L8.600 5.800L6 6.200L4 4.400z" fill="#e0302a"/></svg>
<span class="t" style="left:259.4px;top:61.3px;font-size:10px;color:#1c1c1c;font-weight:normal;height:10px;line-height:10px;transform:scaleX(0.8889);">$E$3:$E$7</span>
<div class="red" style="left:253.500px;top:54.300px;width:85.700px;height:23.400px;"></div>
<span class="t" style="left:257.0px;top:86.9px;font-size:10px;color:#1c1c1c;font-weight:normal;height:10px;line-height:10px;transform:scaleX(0.9706);">Look in:</span>
<div class="a" style="left:256px;top:102.200px;width:298.500px;height:16.500px;background:#e2e2e2;border:1px solid #adadad;"></div>
<span class="t" style="left:260.0px;top:105.7px;font-size:10px;color:#1c1c1c;font-weight:normal;height:10px;line-height:10px;transform:scaleX(0.9065);">Formula and Value Cells</span>
<svg style="left:544.800px;top:108.800px" width="7" height="4.500" viewBox="0 0 7 4.500" fill="none" stroke="#444" stroke-width="1"><path d="M0.500 0.500L3.500 3.500L6.500 0.500"/></svg>
<div class="red" style="left:253.500px;top:96.500px;width:136.800px;height:26.200px;"></div>
<div class="a" style="left:257.3px;top:139px;width:95.19999999999999px;height:76.30000000000001px;border:1px solid #e3e3e3;"></div>
<div class="a" style="left:261.6px;top:138px;width:26.19999999999999px;height:3px;background:#f0f0f0;"></div>
<span class="t" style="left:263.6px;top:134.4px;font-size:10px;color:#1c1c1c;font-weight:normal;height:10px;line-height:10px;transform:scaleX(0.9073);">Go to</span>
<div class="a" style="left:358.9px;top:139px;width:95.5px;height:76.30000000000001px;border:1px solid #e3e3e3;"></div>
<div class="a" style="left:362.5px;top:138px;width:23.69999999999999px;height:3px;background:#f0f0f0;"></div>
<span class="t" style="left:364.5px;top:134.4px;font-size:10px;color:#1c1c1c;font-weight:normal;height:10px;line-height:10px;transform:scaleX(0.8642);">Base</span>
<div class="a" style="left:459.5px;top:139px;width:96.5px;height:76.30000000000001px;border:1px solid #e3e3e3;"></div>
<div class="a" style="left:463.3px;top:138px;width:28.69999999999999px;height:3px;background:#f0f0f0;"></div>
<span class="t" style="left:465.3px;top:134.4px;font-size:10px;color:#1c1c1c;font-weight:normal;height:10px;line-height:10px;transform:scaleX(0.8886);">Select</span>
<div class="radio on" style="left:263.0px;top:158.5px;"></div>
<span class="t" style="left:277.0px;top:159.9px;font-size:10px;color:#1c1c1c;font-weight:normal;height:10px;line-height:10px;transform:scaleX(0.9453);">Maximum value</span>
<div class="radio" style="left:262.8px;top:182.3px;"></div>
<span class="t" style="left:277.0px;top:183.7px;font-size:10px;color:#1c1c1c;font-weight:normal;height:10px;line-height:10px;transform:scaleX(0.9338);">Minimum value</span>
<div class="radio" style="left:364.0px;top:150.1px;"></div>
<span class="t" style="left:377.9px;top:151.5px;font-size:10px;color:#1c1c1c;font-weight:normal;height:10px;line-height:10px;transform:scaleX(0.8413);">Cell</span>
<div class="radio" style="left:364.0px;top:173.9px;"></div>
<span class="t" style="left:377.9px;top:175.3px;font-size:10px;color:#1c1c1c;font-weight:normal;height:10px;line-height:10px;transform:scaleX(0.9352);">Entire row</span>
<div class="radio on" style="left:364.0px;top:198.3px;"></div>
<span class="t" style="left:377.9px;top:199.7px;font-size:10px;color:#1c1c1c;font-weight:normal;height:10px;line-height:10px;transform:scaleX(0.9372);">Entire column</span>
<div class="radio" style="left:465.3px;top:158.7px;"></div>
<span class="t" style="left:478.7px;top:160.1px;font-size:10px;color:#1c1c1c;font-weight:normal;height:10px;line-height:10px;transform:scaleX(0.9390);">First cell only</span>
<div class="radio on" style="left:465.3px;top:181.9px;"></div>
<span class="t" style="left:478.7px;top:183.3px;font-size:10px;color:#1c1c1c;font-weight:normal;height:10px;line-height:10px;transform:scaleX(0.8907);">All cells</span>
<div class="red" style="left:256.300px;top:153.300px;width:91.700px;height:22.400px;"></div>
<div class="red" style="left:358.600px;top:189.500px;width:85.600px;height:24.600px;"></div>
<div class="red" style="left:459.200px;top:174.300px;width:77.300px;height:23px;"></div>
<div class="a" style="left:412.700px;top:225.200px;width:67.800px;height:20.200px;background:#e5f1fb;border:1px solid #2b8ae0;"></div>
<span class="t" style="left:441.0px;top:230.3px;font-size:10px;color:#1c1c1c;font-weight:normal;height:10px;line-height:10px;transform:scaleX(0.8606);">Ok</span>
<div class="a" style="left:487.300px;top:225.200px;width:67.800px;height:19.600px;background:#e1e1e1;border:1px solid #adadad;"></div>
<span class="t" style="left:506.5px;top:230.3px;font-size:10px;color:#1c1c1c;font-weight:normal;height:10px;line-height:10px;transform:scaleX(0.9345);">Cancel</span>
<div class="red" style="left:407px;top:220.800px;width:77.500px;height:29.200px;"></div>
<div class="a" style="left:712.600px;top:62.500px;width:1.400px;height:3.500px;background:#e8737a;"></div>
<div class="a" style="left:713px;top:266.500px;width:1.500px;height:3px;background:#e8737a;"></div>
</body>
</html>
